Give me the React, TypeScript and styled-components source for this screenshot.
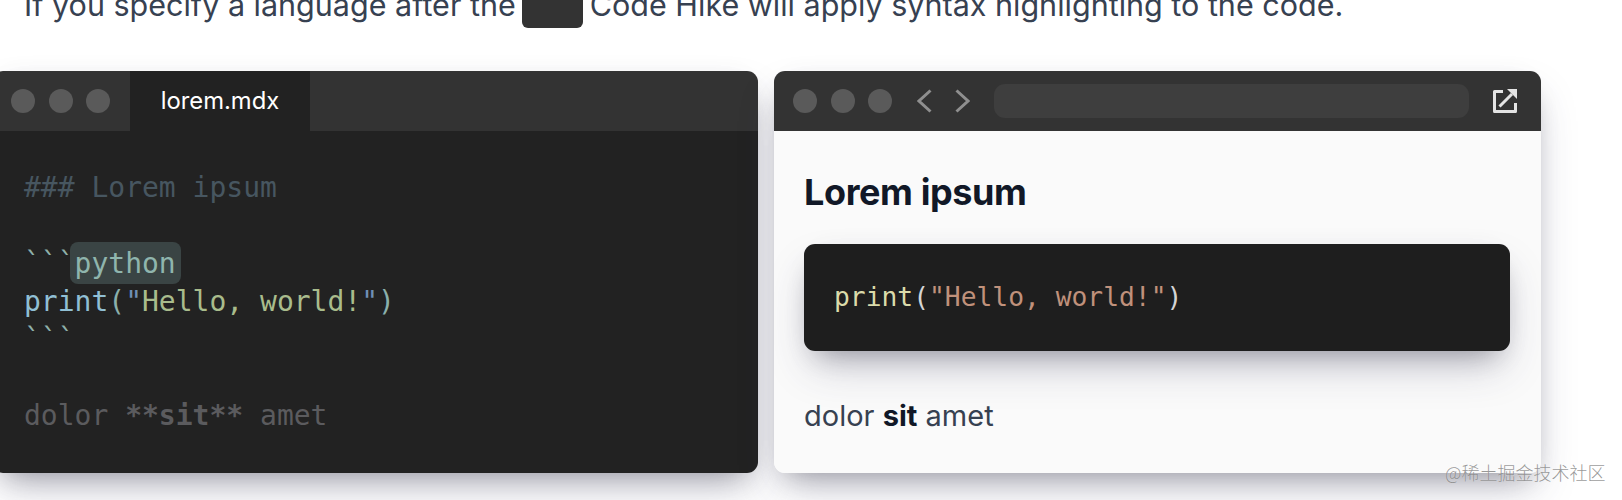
import React from "react";
import styled, { createGlobalStyle } from "styled-components";

const Global = createGlobalStyle`
  html, body { margin: 0; padding: 0; background: #fff; }
  body { font-family: Inter, "Liberation Sans", sans-serif; overflow: hidden; }
`;

const Page = styled.div`
  position: relative;
  width: 1622px;
  height: 500px;
  overflow: hidden;
  background: #fff;
`;

const Intro = styled.p`
  margin: -18px 0 0 24px;
  height: 89px;
  font-size: 30.5px;
  line-height: 46px;
  color: #374151;
  white-space: nowrap;
`;

const EmptyCode = styled.span`
  display: inline-block;
  width: 61px;
  height: 46px;
  margin: 0 7px 0 6px;
  vertical-align: top;
  background: #333333;
  border-radius: 6px;
`;

const Panels = styled.div`
  display: grid;
  grid-template-columns: 766px 767px;
  gap: 16px;
  margin-left: -8px;
`;

const Panel = styled.section`
  height: 402px;
  border-radius: 11px;
  overflow: hidden;
  display: flex;
  flex-direction: column;
  box-shadow: 0 21px 43px -8px rgba(50, 50, 93, 0.27), 0 13px 26px -13px rgba(0, 0, 0, 0.32),
    0 -10px 26px -10px rgba(0, 0, 0, 0.025);
`;

const TitleBar = styled.header`
  flex: 0 0 60px;
  height: 60px;
  background: #333333;
  display: flex;
  align-items: center;
`;

const Dots = styled.div`
  display: flex;
  gap: 13.5px;
  margin-left: 19px;
  flex: none;
`;

const Dot = styled.span`
  width: 24px;
  height: 24px;
  border-radius: 50%;
  background: #5a5a5a;
`;

const Tab = styled.div`
  margin-left: 20px;
  width: 180px;
  height: 60px;
  padding-bottom: 2px;
  box-sizing: border-box;
  background: #222222;
  color: #fff;
  font-size: 23.8px;
  display: flex;
  align-items: center;
  justify-content: center;
`;

const EditorBody = styled.pre`
  flex: 1;
  margin: 0;
  padding: 38px 32px 0;
  background: #222222;
  font-family: "DejaVu Sans Mono", monospace;
  font-size: 28px;
  line-height: 38px;
`;

const Line = styled.div`
  height: 38px;
  white-space: pre;
`;

const Token = styled.span<{ $c: string; $b?: boolean }>`
  color: ${(p) => p.$c};
  font-weight: ${(p) => (p.$b ? 700 : 400)};
`;

const Highlight = styled.span`
  display: inline-block;
  height: 42px;
  line-height: 44px;
  padding: 0 5px;
  margin: -3px -5px 0;
  background: #3a4444;
  border-radius: 8px;
  color: #8fb5ad;
  vertical-align: top;
`;

const NavIcon = styled.svg<{ $ml?: number; $mr?: number }>`
  flex: none;
  display: block;
  margin-left: ${(p) => p.$ml ?? 0}px;
  margin-right: ${(p) => p.$mr ?? 0}px;
`;

const UrlBar = styled.div`
  flex: 1;
  height: 34px;
  margin: 0 24px;
  border-radius: 11px;
  background: #3e3e3e;
`;

const PreviewBody = styled.div`
  flex: 1;
  background: #fafafa;
  padding: 38px 31px 0 30px;
`;

const Heading = styled.h3`
  margin: 0;
  font-size: 36px;
  line-height: 46px;
  font-weight: 700;
  letter-spacing: -0.4px;
  color: #111827;
`;

const CodeBlock = styled.pre`
  margin: 29px 0 0;
  height: 107px;
  padding: 0 30px 2px;
  box-sizing: border-box;
  display: flex;
  align-items: center;
  background: #1e1e1e;
  border-radius: 11px;
  font-family: "DejaVu Sans Mono", monospace;
  font-size: 26.3px;
  box-shadow: 0 21px 43px -8px rgba(50, 50, 93, 0.27), 0 13px 26px -13px rgba(0, 0, 0, 0.32),
    0 -10px 26px -10px rgba(0, 0, 0, 0.025);
`;

const Para = styled.p`
  margin: 45px 0 0;
  font-size: 29px;
  line-height: 40px;
  color: #374151;

  strong {
    color: #111827;
    font-weight: 700;
  }
`;

const Watermark = styled.div`
  position: absolute;
  left: 1445px;
  top: 461px;
  font-family: "Noto Sans CJK SC", sans-serif;
  font-size: 18px;
  font-weight: 300;
  line-height: 22px;
  color: rgba(125, 125, 125, 0.8);
  text-shadow: 0 0 1px rgba(255, 255, 255, 0.5);
  white-space: nowrap;
`;

export default function App() {
  return (
    <Page>
      <Global />
      <Intro>
        If you specify a language after the<EmptyCode />Code Hike will apply syntax highlighting to the code.
      </Intro>
      <Panels>
        <Panel>
          <TitleBar>
            <Dots>
              <Dot />
              <Dot />
              <Dot />
            </Dots>
            <Tab>lorem.mdx</Tab>
          </TitleBar>
          <EditorBody>
            <Line>
              <Token $c="#475660">### Lorem ipsum</Token>
            </Line>
            <Line />
            <Line>
              <Token $c="#8fb0aa">```</Token>
              <Highlight>python</Highlight>
            </Line>
            <Line>
              <Token $c="#90bfd4">print</Token>
              <Token $c="#8ab0ac">(</Token>
              <Token $c="#6f8fb5">"</Token>
              <Token $c="#a9bc8c">Hello, world!</Token>
              <Token $c="#6f8fb5">"</Token>
              <Token $c="#8ab0ac">)</Token>
            </Line>
            <Line>
              <Token $c="#8fb0aa">```</Token>
            </Line>
            <Line />
            <Line>
              <Token $c="#5b5b5e">dolor </Token>
              <Token $c="#5b5b5e" $b>**sit**</Token>
              <Token $c="#5b5b5e"> amet</Token>
            </Line>
          </EditorBody>
        </Panel>
        <Panel>
          <TitleBar>
            <Dots>
              <Dot />
              <Dot />
              <Dot />
            </Dots>
            <NavIcon $ml={25} width="15" height="24" viewBox="0 0 15 24">
              <path d="M13.5 1.5 2 12l11.5 10.5" fill="none" stroke="#8f8f8f" strokeWidth="3" />
            </NavIcon>
            <NavIcon $ml={23} width="15" height="24" viewBox="0 0 15 24">
              <path d="M1.5 1.5 13 12 1.5 22.5" fill="none" stroke="#8f8f8f" strokeWidth="3" />
            </NavIcon>
            <UrlBar />
            <NavIcon $mr={24} width="24" height="24" viewBox="0 0 24 24">
              <path d="M10 2.5H1.5v20h21V14" fill="none" stroke="#e4e4e4" strokeWidth="3" strokeLinejoin="round" />
              <path d="M6.5 17.5 19 5" fill="none" stroke="#e4e4e4" strokeWidth="3" />
              <path d="M14 0h10v10z" fill="#e4e4e4" />
            </NavIcon>
          </TitleBar>
          <PreviewBody>
            <Heading>Lorem ipsum</Heading>
            <CodeBlock>
              <Token $c="#dbdbaa">print</Token>
              <Token $c="#d4d4d4">(</Token>
              <Token $c="#c0917b">"Hello, world!"</Token>
              <Token $c="#d4d4d4">)</Token>
            </CodeBlock>
            <Para>
              dolor <strong>sit</strong> amet
            </Para>
          </PreviewBody>
        </Panel>
      </Panels>
      <Watermark>@稀土掘金技术社区</Watermark>
    </Page>
  );
}
